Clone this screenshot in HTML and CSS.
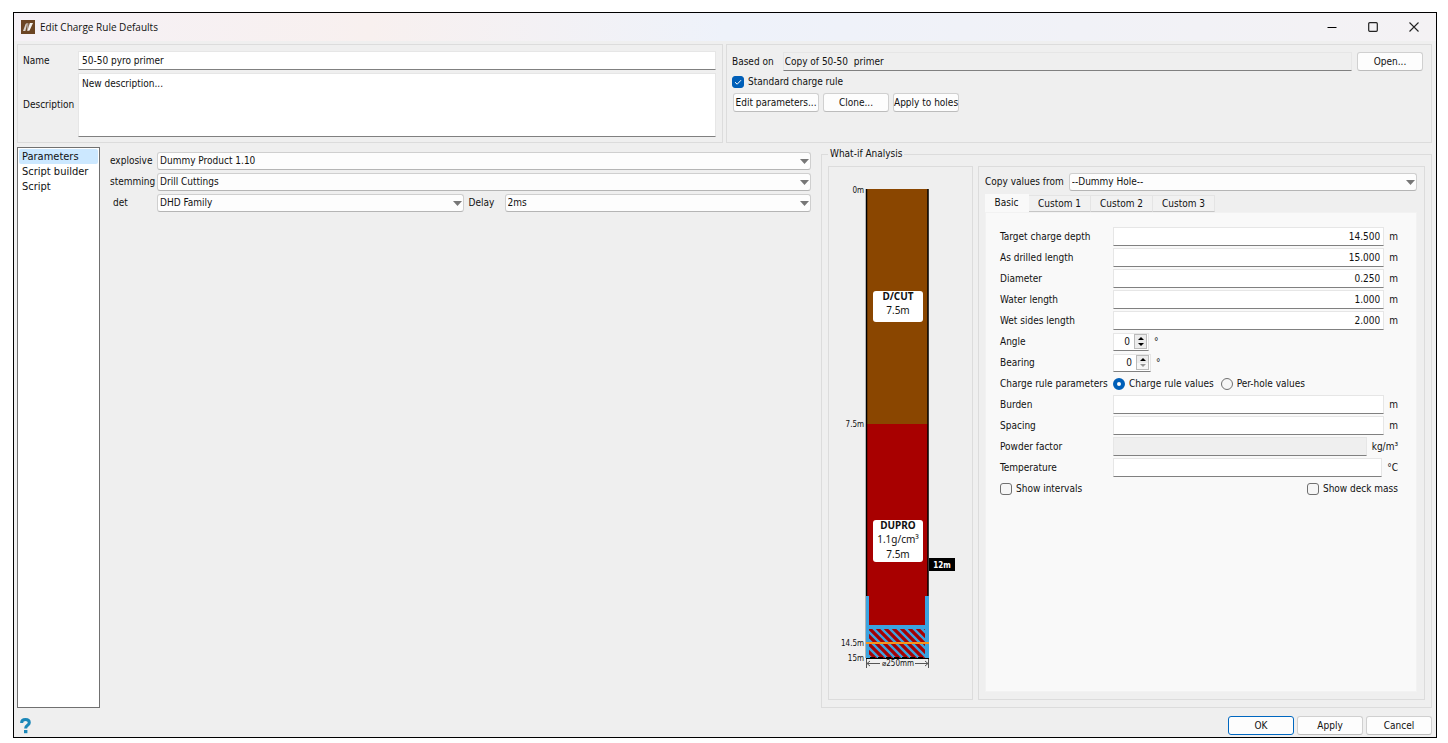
FILE: index.html
```html
<!DOCTYPE html>
<html lang="en">
<head>
  <meta charset="UTF-8">
  <meta name="viewport" content="width=device-width, initial-scale=1.0">
  <title>Edit Charge Rule Defaults</title>
  <link rel="stylesheet" href="styles.css">
</head>
<body>
  <div class="window">
    <header class="titlebar">
      <svg class="app-icon" width="14" height="14" viewBox="0 0 14 14">
        <rect width="14" height="14" fill="#6b4423"/>
        <path d="M2 11 L4.6 4 L6.4 3 L4.4 11 Z" fill="#d9d2cc"/>
        <path d="M5.6 3 L7.4 3 L7.8 10 L6 11 Z" fill="#a8978a"/>
        <path d="M6.4 11 L8.8 3 L12 3 L8.6 10.5 Z" fill="#f4f1ee"/>
      </svg>
      <h1 class="title">Edit Charge Rule Defaults</h1>
      <div class="window-buttons">
        <button class="window-button" aria-label="Minimize">
          <svg width="10" height="10" viewBox="0 0 10 10"><path d="M0.5 5.5 H9.5" stroke="#000"/></svg>
        </button>
        <button class="window-button" aria-label="Maximize">
          <svg width="10" height="10" viewBox="0 0 10 10"><rect x="0.7" y="0.7" width="8.6" height="8.6" rx="1" fill="none" stroke="#222" stroke-width="1.2"/></svg>
        </button>
        <button class="window-button" aria-label="Close">
          <svg width="10" height="10" viewBox="0 0 10 10"><path d="M0.5 0.5 L9.5 9.5 M9.5 0.5 L0.5 9.5" stroke="#222" stroke-width="1.1"/></svg>
        </button>
      </div>
    </header>

    <div class="top">
      <section class="panel details">
        <label for="name">Name</label>
        <input class="field" id="name" type="text" value="50-50 pyro primer">
        <label for="description">Description</label>
        <textarea class="field description" id="description">New description...</textarea>
      </section>

      <section class="panel source">
        <div class="source-row">
          <label for="based-on">Based on</label>
          <input class="field readonly" id="based-on" type="text" value="Copy of 50-50  primer" readonly>
          <button class="button">Open...</button>
        </div>
        <label class="check"><input type="checkbox" checked>Standard charge rule</label>
        <div class="button-row">
          <button class="button wide">Edit parameters...</button>
          <button class="button">Clone...</button>
          <button class="button">Apply to holes</button>
        </div>
      </section>
    </div>

    <main class="main">
      <nav class="pages">
        <a href="#" class="page active">Parameters</a>
        <a href="#" class="page">Script builder</a>
        <a href="#" class="page">Script</a>
      </nav>

      <section class="params">
        <label for="explosive">explosive</label>
        <select class="select" id="explosive"><option>Dummy Product 1.10</option></select>
        <label for="stemming">stemming</label>
        <select class="select" id="stemming"><option>Drill Cuttings</option></select>
        <label class="det-label" for="det">det</label>
        <div class="det-row">
          <select class="select" id="det"><option>DHD Family</option></select>
          <label class="delay-label" for="delay">Delay</label>
          <select class="select" id="delay"><option>2ms</option></select>
        </div>
      </section>

      <fieldset class="whatif">
        <legend>What-if Analysis</legend>

        <div class="frame hole">
          <svg class="hole-drawing" width="142" height="530" viewBox="1 0 142 530">
            <defs>
              <pattern id="water" width="8" height="8" patternUnits="userSpaceOnUse">
                <rect width="8" height="8" fill="#a80000"/>
                <path d="M-2 -2 L10 10 M-2 6 L2 10 M6 -2 L10 2" stroke="#3ba3e0" stroke-width="2.4"/>
              </pattern>
            </defs>

            <!-- decks -->
            <rect x="38" y="22" width="62" height="235" fill="#8a4600"/>
            <rect x="38" y="257" width="62" height="234" fill="#a80000"/>
            <path d="M38.5 22 V491 M100 22 V491" stroke="#000" stroke-width="1.5"/>

            <!-- water and wet sides -->
            <rect x="41" y="461" width="56" height="30" fill="url(#water)"/>
            <rect x="38" y="429" width="3" height="62" fill="#3ba3e0"/>
            <rect x="97" y="429" width="4" height="62" fill="#3ba3e0"/>
            <rect x="38" y="458" width="63" height="4" fill="#3ba3e0"/>
            <rect x="38" y="475" width="63" height="2" fill="#f7931e"/>
            <path d="M38 491.5 H101" stroke="#000"/>
            <path d="M42 490.5 H97" stroke="#000" stroke-dasharray="5 3"/>

            <!-- depth scale -->
            <g class="depth" text-anchor="end">
              <text x="36" y="26">0m</text>
              <text x="36" y="260">7.5m</text>
              <text x="36" y="479">14.5m</text>
              <text x="36" y="494">15m</text>
            </g>

            <!-- deck labels -->
            <rect x="45" y="124" width="50" height="31" rx="3" fill="#fff"/>
            <rect x="45" y="353" width="50" height="42" rx="3" fill="#fff"/>
            <g class="deck" text-anchor="middle">
              <text class="deck-name" x="70" y="133">D/CUT</text>
              <text x="70" y="147">7.5m</text>
              <text class="deck-name" x="70" y="362">DUPRO</text>
              <text x="70" y="376">1.1g/cm³</text>
              <text x="70" y="391">7.5m</text>
            </g>

            <!-- primer -->
            <rect x="101" y="391" width="26" height="13" fill="#000"/>
            <text class="primer" x="114" y="401" text-anchor="middle">12m</text>

            <!-- diameter -->
            <path d="M38.5 492 V501 M100.5 492 V501 M39 496.5 H52 M42 494 L39 496.5 L42 499 M87 496.5 H100 M97 494 L100 496.5 L97 499" fill="none" stroke="#555"/>
            <text class="diameter" x="70" y="499" text-anchor="middle">⌀250mm</text>
          </svg>
        </div>

        <div class="frame values">
          <div class="copy-row">
            <label for="copy-from">Copy values from</label>
            <select class="select" id="copy-from"><option>--Dummy Hole--</option></select>
          </div>
          <div class="tabs" role="tablist">
            <button class="tab selected" role="tab" aria-selected="true">Basic</button>
            <button class="tab" role="tab">Custom 1</button>
            <button class="tab" role="tab">Custom 2</button>
            <button class="tab" role="tab">Custom 3</button>
          </div>
          <div class="tab-page" role="tabpanel">
            <div class="row">
              <label for="target-depth">Target charge depth</label>
              <input class="field number" id="target-depth" type="text" value="14.500">
              <span>m</span>
            </div>
            <div class="row">
              <label for="drilled-length">As drilled length</label>
              <input class="field number" id="drilled-length" type="text" value="15.000">
              <span>m</span>
            </div>
            <div class="row">
              <label for="diameter">Diameter</label>
              <input class="field number" id="diameter" type="text" value="0.250">
              <span>m</span>
            </div>
            <div class="row">
              <label for="water-length">Water length</label>
              <input class="field number" id="water-length" type="text" value="1.000">
              <span>m</span>
            </div>
            <div class="row">
              <label for="wet-sides">Wet sides length</label>
              <input class="field number" id="wet-sides" type="text" value="2.000">
              <span>m</span>
            </div>
            <div class="row">
              <label for="angle">Angle</label>
              <div class="spin">
                <input id="angle" type="text" value="0">
                <div class="spin-buttons">
                  <button aria-label="Increase angle"><svg width="6" height="3" viewBox="0 0 6 3"><path d="M0 3 L3 0 L6 3 Z"/></svg></button>
                  <button aria-label="Decrease angle"><svg width="6" height="3" viewBox="0 0 6 3"><path d="M0 0 L3 3 L6 0 Z"/></svg></button>
                </div>
              </div>
              <span>°</span>
            </div>
            <div class="row">
              <label for="bearing">Bearing</label>
              <div class="spin bearing">
                <input id="bearing" type="text" value="0">
                <div class="spin-buttons">
                  <button aria-label="Increase bearing"><svg width="6" height="3" viewBox="0 0 6 3"><path d="M0 3 L3 0 L6 3 Z"/></svg></button>
                  <button disabled aria-label="Decrease bearing"><svg width="6" height="3" viewBox="0 0 6 3"><path d="M0 0 L3 3 L6 0 Z"/></svg></button>
                </div>
              </div>
              <span>°</span>
            </div>
            <div class="row">
              <span class="row-label">Charge rule parameters</span>
              <label class="check"><input type="radio" name="values" checked>Charge rule values</label>
              <label class="check"><input type="radio" name="values">Per-hole values</label>
            </div>
            <div class="row">
              <label for="burden">Burden</label>
              <input class="field number" id="burden" type="text">
              <span>m</span>
            </div>
            <div class="row">
              <label for="spacing">Spacing</label>
              <input class="field number" id="spacing" type="text">
              <span>m</span>
            </div>
            <div class="row">
              <label for="powder">Powder factor</label>
              <input class="field number readonly" id="powder" type="text" readonly>
              <span>kg/m³</span>
            </div>
            <div class="row">
              <label for="temperature">Temperature</label>
              <input class="field number" id="temperature" type="text">
              <span>°C</span>
            </div>
            <div class="row between">
              <label class="check"><input type="checkbox">Show intervals</label>
              <label class="check"><input type="checkbox">Show deck mass</label>
            </div>
          </div>
        </div>
      </fieldset>
    </main>

    <footer class="footer">
      <button class="help" aria-label="Help">
        <svg width="11" height="16" viewBox="0 0 11 16">
          <path d="M1.6 5 C1.6 2.6 3.2 1.6 5.5 1.6 C7.9 1.6 9.3 2.8 9.3 4.7 C9.3 7.4 5.6 7.2 5.6 10.4" fill="none" stroke="#1b87b8" stroke-width="3"/>
          <rect x="4" y="12" width="3.4" height="3.2" fill="#1b87b8"/>
        </svg>
      </button>
      <button class="button default">OK</button>
      <button class="button">Apply</button>
      <button class="button">Cancel</button>
    </footer>
  </div>
</body>
</html>
```
FILE: styles.css
```css
* {
  box-sizing: border-box;
}

body {
  margin: 0;
  padding: 12px 11px 5px 13px;
  min-height: 100vh;
  display: flex;
  background-color: #fff;
  color: #111;
  font-family: "DejaVu Sans Condensed", Tahoma, sans-serif;
  font-size: 10px;
  line-height: 14px;
}

button,
input,
select,
textarea {
  font: inherit;
  color: inherit;
  margin: 0;
}

button {
  padding: 0;
}

.window {
  flex: 1;
  display: flex;
  flex-direction: column;
  border: 1px solid #000;
  background-color: #efefef;
}

/* Title bar */
.titlebar {
  display: flex;
  align-items: center;
  gap: 5px;
  height: 28px;
  padding: 0 2px 0 7px;
  background: linear-gradient(90deg, #f5f1f6, #f8f0ef 25%, #eef2fa 50%, #f4f2f4);
}

.title {
  margin: 0;
  font-family: "Open Sans", "Segoe UI", sans-serif;
  font-size: 10px;
  font-weight: normal;
}

.window-buttons {
  display: flex;
  margin-left: auto;
}

.window-button {
  display: flex;
  align-items: center;
  justify-content: center;
  width: 41px;
  height: 28px;
  border: none;
  background: none;
}

/* Shared controls */
.field {
  min-width: 0;
  height: 19px;
  padding: 0 3px;
  border: 1px solid #e6e6e6;
  border-bottom-color: #808080;
  background-color: #fff;
  outline: none;
}

.readonly {
  background-color: #efefef;
}

.button {
  width: 66px;
  height: 19px;
  border: 1px solid #d0d0d0;
  border-bottom-color: #bcbcbc;
  border-radius: 3px;
  background-color: #fdfdfd;
  white-space: nowrap;
}

.default {
  border-color: #0067c0;
}

.select {
  appearance: none;
  min-width: 0;
  height: 18px;
  padding: 0 16px 0 2px;
  border: 1px solid #cfcfcf;
  border-bottom-color: #b5b5b5;
  border-radius: 3px;
  background: #fdfdfd url("data:image/svg+xml,%3Csvg xmlns='http://www.w3.org/2000/svg' width='9' height='5'%3E%3Cpath d='M0 0 H9 L4.5 5 Z' fill='%23777'/%3E%3C/svg%3E") no-repeat right 1px center;
}

.check {
  display: flex;
  align-items: center;
  gap: 4px;
  white-space: nowrap;
}

.check input {
  appearance: none;
  width: 12px;
  height: 12px;
  border: 1px solid #707070;
  border-radius: 3px;
  background-color: #f6f6f6;
}

.check input[type="checkbox"]:checked {
  border-color: #005fb8;
  background: #005fb8 url("data:image/svg+xml,%3Csvg xmlns='http://www.w3.org/2000/svg' width='10' height='10'%3E%3Cpath d='M2 5.2 L4.2 7.2 L8 3.2' fill='none' stroke='white'/%3E%3C/svg%3E") no-repeat center;
}

.check input[type="radio"] {
  border-radius: 50%;
}

.check input[type="radio"]:checked {
  border: 4px solid #005fb8;
  background-color: #fff;
}

/* Top panels */
.top {
  display: grid;
  grid-template-columns: 1fr 1fr;
  gap: 3px;
  padding: 3px 4px 4px 3px;
}

.panel {
  height: 99px;
  border: 1px solid #dcdcdc;
}

.details {
  display: grid;
  grid-template-columns: 49px 1fr;
  grid-template-rows: 19px 1fr;
  gap: 3px 6px;
  align-items: center;
  padding: 6px 6px 5px 5px;
}

.description {
  height: 64px;
  resize: none;
  padding-top: 3px;
}

.source {
  display: flex;
  flex-direction: column;
  gap: 3px;
  padding: 7px 8px 4px 5px;
}

.source-row {
  display: flex;
  align-items: center;
  gap: 5px;
}

.source-row .field {
  flex: 1;
  margin-left: 4px;
  padding: 0 1px;
  white-space: pre;
}

.source .check {
  height: 16px;
}

.button-row {
  display: flex;
  gap: 4px;
  padding-left: 1px;
}

.wide {
  width: 86px;
}

/* Main area */
.main {
  flex: 1;
  display: grid;
  grid-template-columns: 83px 711px 1fr;
  padding: 0 4px 0 3px;
}

.pages {
  display: flex;
  flex-direction: column;
  padding: 1px;
  border: 1px solid #707070;
  background-color: #fff;
  font-size: 11px;
}

.page {
  padding: 0 3px;
  line-height: 15px;
  color: inherit;
  text-decoration: none;
}

.active {
  border-radius: 2px;
  background-color: #cce8ff;
}

.params {
  display: grid;
  grid-template-columns: 44px 1fr;
  gap: 3px;
  align-content: start;
  align-items: center;
  padding: 5px 0 0 10px;
}

.det-label {
  padding-left: 3px;
}

.det-row {
  display: grid;
  grid-template-columns: 1fr 31px 1fr;
  gap: 0 5px;
  align-items: center;
}

.whatif {
  display: grid;
  grid-template-columns: 145px 1fr;
  gap: 5px;
  min-width: 0;
  margin: 0 0 0 10px;
  padding: 5px 6px 7px;
  border: 1px solid #dcdcdc;
}

.whatif legend {
  padding: 0 2px;
}

.frame {
  border: 1px solid #dcdcdc;
}

.hole-drawing {
  display: block;
}

.hole-drawing text {
  fill: #111;
}

.depth,
.diameter {
  font-size: 8px;
}

.deck {
  font-family: "Noto Sans", sans-serif;
  font-size: 10px;
}

.deck-name {
  font-weight: bold;
}

.hole-drawing .primer {
  fill: #fff;
  font-size: 8px;
  font-weight: bold;
}

/* Hole values */
.values {
  display: flex;
  flex-direction: column;
  padding: 6px 7px 7px 6px;
}

.copy-row {
  display: flex;
  align-items: center;
  gap: 5px;
}

.copy-row .select {
  flex: 1;
}

.tabs {
  display: flex;
  align-items: flex-end;
  height: 21px;
}

.tab {
  width: 62px;
  height: 17px;
  border: 1px solid #e4e4e4;
  border-left: none;
  border-bottom: 1px solid #c6c6c6;
  background-color: #f1f1f1;
}

.selected {
  width: 44px;
  height: 18px;
  border-color: #f9f9f9;
  background-color: #f9f9f9;
}

.tab-page {
  flex: 1;
  padding: 13px 18px 0 14px;
  border: 1px solid #f2f2f2;
  background-color: #f9f9f9;
}

.row {
  display: flex;
  align-items: center;
  gap: 5px;
  height: 21px;
}

.row > label:first-child:not(.check),
.row-label {
  width: 108px;
}

.row .number {
  flex: 1;
  text-align: right;
}

.row .check + .check {
  margin-left: 2px;
}

.between {
  justify-content: space-between;
}

.spin {
  display: flex;
  align-items: center;
  width: 36px;
  height: 18px;
  padding-right: 1px;
  border: 1px solid #e6e6e6;
  border-bottom-color: #808080;
  background-color: #fff;
}

.spin input {
  flex: 1;
  min-width: 0;
  padding: 0 4px;
  border: none;
  background: none;
  text-align: right;
}

.spin-buttons {
  display: grid;
  width: 13px;
  height: 15px;
  border: 1px solid #bbb;
}

.spin-buttons button {
  display: flex;
  align-items: center;
  justify-content: center;
  border: none;
  background-color: #ececec;
}

.spin-buttons button:disabled {
  opacity: 0.4;
}

.bearing {
  width: 38px;
}

/* Footer */
.footer {
  display: flex;
  align-items: center;
  gap: 3px;
  height: 29px;
  padding: 6px 4px 0 6px;
}

.help {
  display: flex;
  margin-right: auto;
  border: none;
  background: none;
}
```
